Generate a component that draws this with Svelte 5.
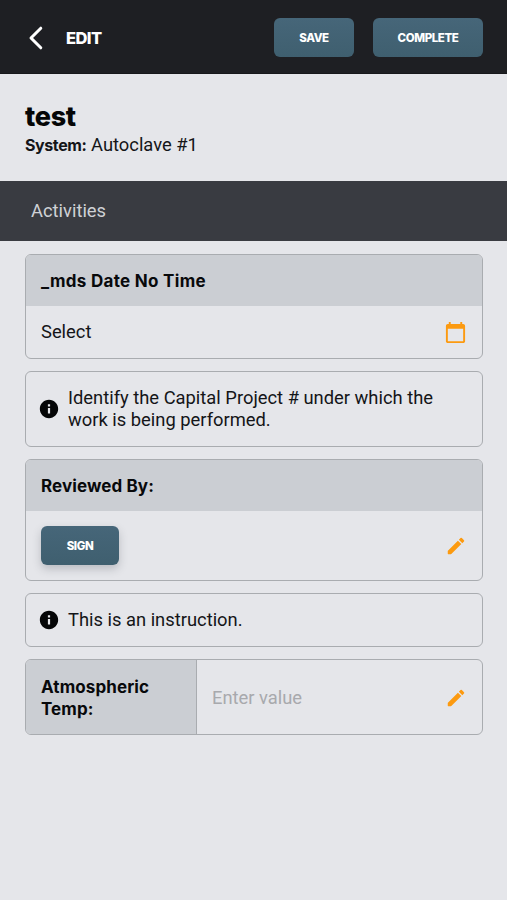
<script>
    let title = $state("test");
    let system = $state("Autoclave #1");
    let reading = $state("");
</script>

{#snippet info()}
    <svg class="info" width="22" height="22" viewBox="0 0 24 24" aria-hidden="true">
        <path fill="#050607" d="M12 2C6.48 2 2 6.48 2 12s4.48 10 10 10 10-4.48 10-10S17.52 2 12 2zm1.2 15h-2.4v-6h2.4v6zm0-7.8h-2.4V6.8h2.4v2.4z"></path>
    </svg>
{/snippet}

{#snippet pencil()}
    <svg width="22" height="22" viewBox="0 0 24 24" aria-hidden="true">
        <path fill="#fc9a10" d="M3 17.46v3.04c0 .28.22.5.5.5h3.04c.13 0 .26-.05.35-.15L17.81 9.94l-3.75-3.75L3.15 17.1c-.1.1-.15.22-.15.36zM20.71 7.04a1 1 0 0 0 0-1.41l-2.34-2.34a1 1 0 0 0-1.41 0l-1.83 1.83 3.75 3.75 1.83-1.83z"></path>
    </svg>
{/snippet}

<div class="page">
    <header class="topBar">
        <button class="back" aria-label="Go back">
            <svg width="16" height="24" viewBox="0 0 16 24" fill="none">
                <path d="M13.8 2.2L4 12L13.8 21.8" stroke="#ffffff" stroke-width="3" stroke-linecap="round" stroke-linejoin="round"></path>
            </svg>
        </button>
        <span class="mode">EDIT</span>
        <button class="button save">SAVE</button>
        <button class="button complete">COMPLETE</button>
    </header>

    <section class="summary">
        <h1>{title}</h1>
        <p><b>System:</b> <span>{system}</span></p>
    </section>

    <h2 class="activities">Activities</h2>

    <main>
        <div class="card">
            <h3 class="dateName">_mds Date No Time</h3>
            <div class="row dateRow">
                <span>Select</span>
                <svg width="23" height="23" viewBox="0 0 24 24" aria-hidden="true">
                    <path fill="#fc9a10" d="M20 3h-1V1h-2v2H7V1H5v2H4c-1.1 0-2 .9-2 2v16c0 1.1.9 2 2 2h16c1.1 0 2-.9 2-2V5c0-1.1-.9-2-2-2zm0 18H4V8h16v13z"></path>
                </svg>
            </div>
        </div>

        <div class="card note two">
            {@render info()}
            <p>Identify the Capital Project # under which the<br>work is being performed.</p>
        </div>

        <div class="card">
            <h3>Reviewed By:</h3>
            <div class="row signRow">
                <button class="button sign">SIGN</button>
                {@render pencil()}
            </div>
        </div>

        <div class="card note">
            {@render info()}
            <p>This is an instruction.</p>
        </div>

        <div class="card reading">
            <label for="temp">Atmospheric<br>Temp:</label>
            <div class="row">
                <input id="temp" placeholder="Enter value" bind:value={reading}>
                {@render pencil()}
            </div>
        </div>
    </main>
</div>

<style>
    :global(body){
        margin: 0;
        background: #e5e6ea;
    }

    .page{
        min-height: 900px;
        background: #e5e6ea;
        color: #141518;
        font-family: Roboto, sans-serif;
        font-size: 18.35px;
        line-height: 22px;
    }

    .page, .page *{
        box-sizing: border-box;
    }

    h1,h2,h3,p{
        margin: 0;
    }

    svg{
        display: block;
        flex: none;
    }

    .topBar{
        display: flex;
        align-items: center;
        height: 74px;
        padding: 2px 24px 0 27px;
        background: #1e1f23;
        border-bottom: 1px solid #17181b;
    }

    .back{
        background: none;
        border: none;
        padding: 0;
        cursor: pointer;
    }

    .mode{
        margin: 0 auto 0 23px;
        color: #fff;
        font-family: Inter, sans-serif;
        font-size: 16.5px;
        font-weight: 800;
        letter-spacing: -0.6px;
    }

    .button{
        height: 39px;
        padding: 0;
        border: none;
        border-radius: 6px;
        background: linear-gradient(#466679, #3f5f6f);
        color: #fff;
        font-family: Inter, sans-serif;
        font-size: 11.5px;
        font-weight: 800;
        letter-spacing: -0.4px;
        cursor: pointer;
    }

    .save{
        width: 80px;
        margin-right: 19px;
    }

    .complete{
        width: 110px;
    }

    .sign{
        width: 78px;
        box-shadow: 0 4px 8px rgba(60, 65, 75, 0.25);
    }

    .summary{
        height: 107px;
        padding: 28px 25px 0;
    }

    h1{
        color: #050607;
        font-family: Inter, sans-serif;
        font-size: 27px;
        font-weight: 800;
        line-height: 30px;
        letter-spacing: -0.3px;
    }

    .summary p{
        margin-top: 2px;
    }

    .summary b{
        font-family: Inter, sans-serif;
        font-size: 16px;
        font-weight: 700;
        letter-spacing: -0.4px;
    }

    .activities{
        height: 60px;
        padding-left: 31px;
        background: #393b41;
        color: #cfd1d5;
        font-size: 18.35px;
        font-weight: 400;
        line-height: 60px;
    }

    main{
        display: flex;
        flex-direction: column;
        gap: 12px;
        padding: 13px 24px 0 25px;
    }

    .card{
        border: 1px solid #a9acb0;
        border-radius: 6px;
        overflow: hidden;
    }

    h3,label{
        background: #cbced3;
        color: #08090b;
        font-family: Inter, sans-serif;
        font-size: 17px;
        font-weight: 700;
        letter-spacing: 0.1px;
    }

    h3{
        height: 51px;
        padding-left: 15px;
        line-height: 52px;
    }

    .dateName{
        letter-spacing: 0.3px;
    }

    .row{
        display: flex;
        align-items: center;
        justify-content: space-between;
        padding: 0 15px;
    }

    .dateRow{
        height: 52px;
    }

    .signRow{
        height: 69px;
    }

    .note{
        display: flex;
        align-items: center;
        height: 54px;
        padding-left: 12px;
    }

    .two{
        height: 76px;
    }

    .info{
        margin-right: 8px;
    }

    .reading{
        display: flex;
        height: 76px;
    }

    label{
        width: 171px;
        padding: 16px 0 0 15px;
        border-right: 1px solid #a9acb0;
    }

    .reading .row{
        flex: 1;
        padding-top: 2px;
    }

    input{
        width: 180px;
        padding: 0;
        border: none;
        background: none;
        color: #141518;
        font: inherit;
    }

    input::placeholder{
        color: #a8a9ad;
        opacity: 1;
    }
</style>
